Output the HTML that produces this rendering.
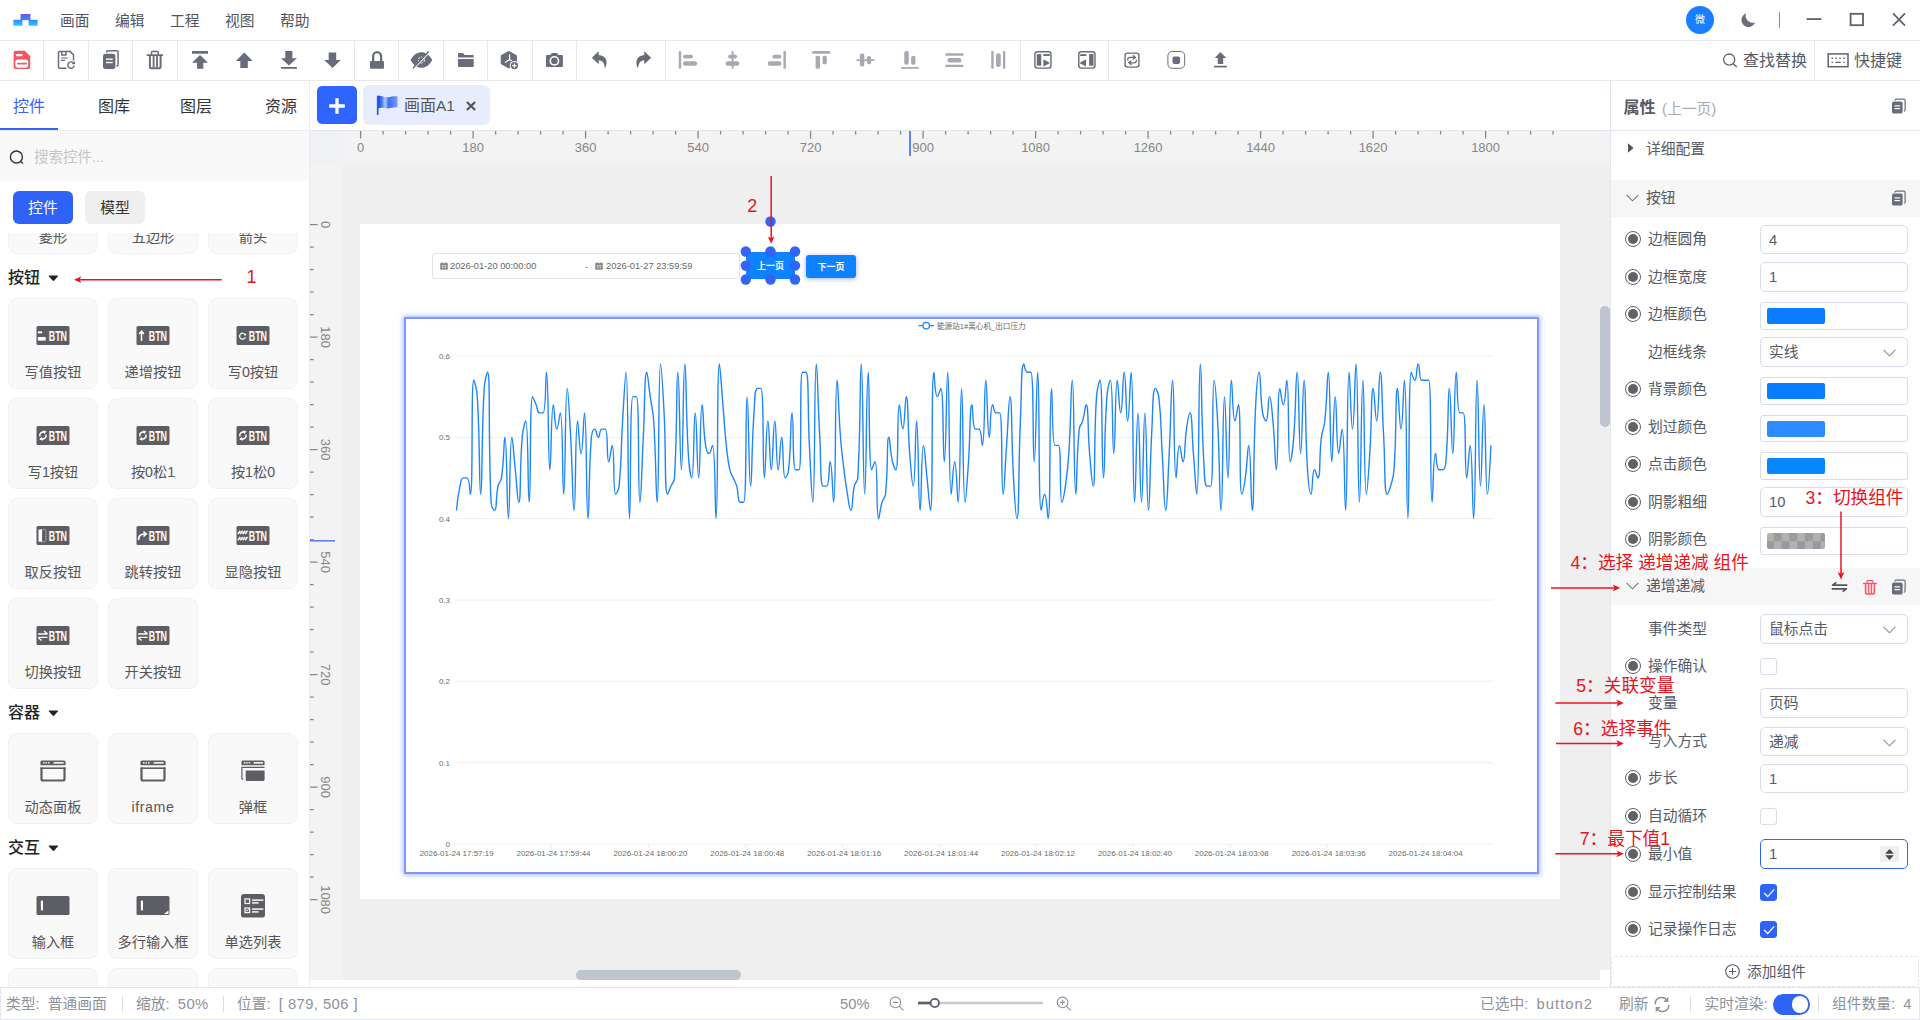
<!DOCTYPE html>
<html lang="zh-CN">
<head>
<meta charset="utf-8">
<title>画面A1</title>
<style>
*{box-sizing:border-box;margin:0;padding:0}
html,body{width:1920px;height:1020px;overflow:hidden;background:#fff}
body{position:relative;font-family:"Liberation Sans","Noto Sans CJK SC",sans-serif;font-size:14.75px;color:#555a66;-webkit-font-smoothing:antialiased}
.abs{position:absolute}
svg{display:block;overflow:visible}
/* top bar */
#topbar{position:absolute;left:0;top:0;width:1920px;height:41px;border-bottom:1px solid #e8e8ec;background:#fff}
#topbar .menu{position:absolute;top:0;height:40px;line-height:42px;font-size:14.75px;color:#50545f;white-space:nowrap}
/* toolbar */
#toolbar{position:absolute;left:0;top:41px;width:1920px;height:40px;border-bottom:1px solid #e8e8ec;background:#fff}
.tb{position:absolute;top:0;height:39px;width:44.33px}
.tb.sep{border-right:1px solid #ebebee}
.tb svg{position:absolute;left:50%;top:50%;transform:translate(-50%,-50%)}
/* left panel */
#left{position:absolute;left:0;top:81px;width:310px;height:906px;background:#fff;border-right:1px solid #ececf0;overflow:hidden}
.ltab{position:absolute;top:0;height:49px;line-height:51px;font-size:16px;color:#333;white-space:nowrap}
.card{position:absolute;width:90px;height:91px;background:#f9f9f9;border:1px solid #f0f0f0;border-radius:9px}
.card .lbl{position:absolute;left:0;right:0;top:63px;text-align:center;font-size:14.2px;line-height:20px;color:#555;white-space:nowrap}
.card svg{position:absolute;left:50%;transform:translateX(-50%)}
.sec{position:absolute;left:8px;font-size:16px;font-weight:500;color:#222;line-height:22px;white-space:nowrap}
/* canvas */
#canvas{position:absolute;left:310px;top:131px;width:1300px;height:849px;background:#efefef;overflow:hidden}
/* right */
#right{position:absolute;left:1610px;top:81px;width:310px;height:906px;background:#fff;border-left:1px solid #e3e6f0;overflow:hidden}
.row{position:absolute;left:0;width:309px;height:30px}
.row .lab{position:absolute;left:37px;top:0;line-height:30px;font-size:14.75px;color:#555a66;white-space:nowrap}
.row .rad{position:absolute;left:14.4px;top:7px;width:16px;height:16px;border:1.8px solid #606268;border-radius:50%}
.row .rad:after{content:"";position:absolute;left:2px;top:2px;right:2px;bottom:2px;border-radius:50%;background:#606268}
.inp{position:absolute;left:149px;top:.5px;width:148px;height:29.8px;border:1px solid #d9dbe8;border-radius:5px;background:#fff;font-size:14.75px;line-height:28px;padding-left:8px;color:#555a66;white-space:nowrap}
.inp.col{height:27.5px;top:3.4px;border-radius:3px}
.inp .sw{position:absolute;left:6px;top:5px;width:58px;height:16px;border-radius:2px}
.inp .chev{position:absolute;right:11px;top:11px}
.cb{position:absolute;left:149px;top:7px;width:17px;height:17px;border:1px solid #d9dbe8;border-radius:3px;background:#fff}
.cb.on{background:#2f63f6;border-color:#2f63f6}
.shead{position:absolute;left:0;width:309px;height:37px;background:#f6f6f6}
.shead .t{position:absolute;left:35px;top:0;line-height:37px;font-size:14.75px;color:#555a66}
.red{color:#e8131e;position:absolute;white-space:nowrap;font-size:18px;line-height:22px}
/* status */
#status{position:absolute;left:0;top:987px;width:1920px;height:33px;border:1px solid #e3e6f0;background:#fff;font-size:14.75px;color:#8d919c}
#status span.t{position:absolute;top:0;line-height:33px;white-space:nowrap}
#status i.sp{position:absolute;top:8px;width:1px;height:16px;background:#dcdde2}
</style>
</head>
<body>
<!--TOPBAR-->
<div id="topbar">
<svg class="abs" style="left:13px;top:14px" width="25" height="12" viewBox="0 0 25 12">
<defs><linearGradient id="lg1" x1="0" y1="0" x2="0" y2="1"><stop offset="0" stop-color="#6a55f6"/><stop offset="1" stop-color="#3f86fa"/></linearGradient>
<linearGradient id="lg2" x1="0" y1="0" x2="0" y2="1"><stop offset="0" stop-color="#2f86ff"/><stop offset="1" stop-color="#2bd0ff"/></linearGradient></defs>
<rect x="7.5" y="0" width="10" height="6.2" fill="url(#lg1)"/><rect x="0.4" y="5.8" width="9" height="6" fill="url(#lg2)"/><rect x="15.6" y="5.8" width="9" height="6" fill="url(#lg2)"/></svg>
<span class="menu" style="left:60px">画面</span><span class="menu" style="left:115px">编辑</span><span class="menu" style="left:170px">工程</span><span class="menu" style="left:225px">视图</span><span class="menu" style="left:280px">帮助</span>
<div class="abs" style="left:1686px;top:6px;width:28px;height:28px;border-radius:50%;background:#1a7ffe;color:#fff;font-size:10px;line-height:28px;text-align:center">微</div>
<svg class="abs" style="left:1741px;top:13px" width="15" height="14" viewBox="0 0 15 14"><path d="M5 0.5A7.2 7.2 0 0 0 14 9.5A7 7 0 1 1 5 0.5Z" fill="#6a6d7a"/></svg>
<div class="abs" style="left:1779px;top:12px;width:1px;height:16px;background:#8a8d96"></div>
<svg class="abs" style="left:1806px;top:12px" width="100" height="15" viewBox="0 0 100 15" fill="none" stroke="#5c606c" stroke-width="1.8"><path d="M0.6 7.1H15.4"/><rect x="44.6" y="1.8" width="12.4" height="11.4"/><path d="M87 1.4L99 13.6M99 1.4L87 13.6" stroke-width="1.7"/></svg>
</div>
<!--TOOLBAR-->
<div id="toolbar">
<svg class="abs" style="left:0;top:0" width="1920" height="39" viewBox="0 41 1920 39">
<g fill="#e9e9ed"><rect x="43" y="41" width="1" height="39"/><rect x="88" y="41" width="1" height="39"/><rect x="132" y="41" width="1" height="39"/><rect x="177" y="41" width="1" height="39"/><rect x="354" y="41" width="1" height="39"/><rect x="398" y="41" width="1" height="39"/><rect x="443" y="41" width="1" height="39"/><rect x="487" y="41" width="1" height="39"/><rect x="532" y="41" width="1" height="39"/><rect x="576" y="41" width="1" height="39"/><rect x="665" y="41" width="1" height="39"/><rect x="1020" y="41" width="1" height="39"/><rect x="1108" y="41" width="1" height="39"/><rect x="1814" y="41" width="1" height="39"/></g>
<path d="M15.6 50.8H24.8L30.2 56V67.1a2 2 0 0 1-2 2H15.6a2 2 0 0 1-2-2V52.8a2 2 0 0 1 2-2Z" fill="#f4575f"/><rect x="15.9" y="54.1" width="6.6" height="2.1" rx="1" fill="#fff"/><rect x="15.3" y="59.4" width="12.8" height="8.4" rx="2.8" fill="#fff"/><rect x="16.9" y="62.7" width="10.3" height="1.9" rx=".9" fill="#f4575f"/>
<g fill="none" stroke="#696c7a" stroke-width="1.5" stroke-linejoin="round"><path d="M66.5 68.2H59.5a1 1 0 0 1-1-1V52.6a1 1 0 0 1 1-1H70.2L73.5 54.9V60.6"/><path d="M61.7 51.8V55H66V51.8"/><path d="M61 58H67.6M61 60.4H65" stroke-width="1.2"/><path d="M73.4 62.9A3.2 3.2 0 1 0 74.2 65.6" stroke-width="1.4"/><path d="M74.4 61.4V63.6H72.2" stroke-width="1.2"/></g>
<path d="M106.5 52.4V52.3a1.5 1.5 0 0 1 1.5-1.5H116.6a1.5 1.5 0 0 1 1.5 1.5V64.6a1.5 1.5 0 0 1-1.5 1.5H116.4" fill="none" stroke="#696c7a" stroke-width="1.5"/><rect x="103" y="53.7" width="12.4" height="15.4" rx="2.3" fill="#696c7a"/><rect x="106" y="58.5" width="6.7" height="1.4" fill="#fff"/><rect x="106" y="61.8" width="6.7" height="1.4" fill="#fff"/>
<g fill="none" stroke="#696c7a"><path d="M151.5 54.4V52.4a.9.9 0 0 1 .9-.9H157.4a.9.9 0 0 1 .9.9V54.4" stroke-width="1.4"/><path d="M149.9 56V67a1.2 1.2 0 0 0 1.2 1.2H159.4a1.2 1.2 0 0 0 1.2-1.2V56" stroke-width="2"/><path d="M153.6 56V67.6M157 56V67.6" stroke-width="1.8"/></g><rect x="146.7" y="54.2" width="16.4" height="1.9" rx=".6" fill="#696c7a"/>
<g fill="#696c7a"><rect x="192" y="51" width="16" height="2.7"/><polygon points="200,55 208,62.75 203.3,62.75 203.3,68.8 197,68.8 197,62.75 192,62.75"/><polygon points="244.3,52.6 252.7,60.9 247.8,60.9 247.8,67.9 240.3,67.9 240.3,60.9 235.8,60.9"/><polygon points="285.3,51 292.4,51 292.4,58.25 296.9,58.25 288.9,65.6 281,58.25 285.3,58.25"/><rect x="281" y="67" width="15.9" height="1.8"/><polygon points="328.7,52.4 336.2,52.4 336.2,60 340.8,60 332.5,67.9 324.2,60 328.7,60"/></g>
<rect x="370" y="60.9" width="14" height="7.9" rx="1" fill="#696c7a"/><path d="M373.15 61.5V56.15a3.98 3.98 0 0 1 7.96 0V61.5" fill="none" stroke="#696c7a" stroke-width="2.3"/>
<path d="M410.6 60C413.6 54.4 417.4 52.2 421.4 52.2C425.4 52.2 429.2 54.4 432.2 60C429.2 65.6 425.4 67.8 421.4 67.8C417.4 67.8 413.6 65.6 410.6 60Z" fill="#696c7a"/><circle cx="421.4" cy="60" r="3" fill="none" stroke="#fff" stroke-width="1" stroke-dasharray="2.2 1.2"/><path d="M430 51.8L414 68.4" stroke="#fff" stroke-width="1.3"/><path d="M428.8 51.6L412.9 68.2" stroke="#696c7a" stroke-width="1.5"/>
<path d="M458 57.6V53.9a1 1 0 0 1 1-1H463l1.6 2.1H472.7a1 1 0 0 1 1 1V57.6Z" fill="#696c7a"/><path d="M458 59H473.7V66a1 1 0 0 1-1 1H459a1 1 0 0 1-1-1Z" fill="#696c7a"/>
<polygon points="508.8,51.4 516.4,55.6 516.4,63.8 508.8,68 501.2,63.8 501.2,55.6" fill="#696c7a" stroke="#696c7a" stroke-width="1" stroke-linejoin="round"/><path d="M509.6 54.3V59.6L505 62.4M509.6 59.6L512 61" stroke="#fff" stroke-width="1.2" fill="none"/><circle cx="514.4" cy="65.6" r="4.7" fill="#fff"/><circle cx="514.4" cy="65.6" r="3.7" fill="#696c7a"/><path d="M512.2 65.6H516.6M514.4 63.4V67.8" stroke="#fff" stroke-width="1.2"/>
<path d="M547 55H550.4L551.7 52.9H557.1L558.4 55H561.9a1 1 0 0 1 1 1V66a1 1 0 0 1-1 1H547a1 1 0 0 1-1-1V56a1 1 0 0 1 1-1Z" fill="#696c7a"/><circle cx="554.4" cy="60.9" r="4.9" fill="#fff"/><circle cx="554.4" cy="60.9" r="3.3" fill="#696c7a"/>
<path d="M598.7 51.3L591.8 57.8L598.7 64.3V60.4C602.5 60.3 604.6 62.6 604.9 68.6C608.8 61.5 605.6 55.4 598.7 55.1Z" fill="#696c7a"/><path d="M598.7 51.3L591.8 57.8L598.7 64.3V60.4C602.5 60.3 604.6 62.6 604.9 68.6C608.8 61.5 605.6 55.4 598.7 55.1Z" fill="#696c7a" transform="translate(1243,0) scale(-1,1)"/>
<g fill="#a7a9b2"><rect x="678.8" y="51" width="2.4" height="17.8" rx="0.8"/><rect x="683" y="54.8" width="9.9" height="3.7" rx="1.8"/><rect x="683" y="61.3" width="14.1" height="4.4" rx="2"/><rect x="731.6" y="51" width="2" height="17.8" rx="0.8"/><rect x="728.1" y="54.8" width="9" height="3.7" rx="1.8"/><rect x="725.6" y="61.3" width="13.8" height="4.4" rx="2"/><rect x="783.4" y="51" width="2.5" height="17.8" rx="0.8"/><rect x="772.5" y="54.8" width="8.9" height="3.7" rx="1.8"/><rect x="767.8" y="61.3" width="13.6" height="4.4" rx="2"/><rect x="812.1" y="51" width="18.2" height="2.7" rx="1"/><rect x="815.6" y="55.7" width="4.4" height="13.1" rx="1.5"/><rect x="822.6" y="55.7" width="4.2" height="8.5" rx="1.5"/><rect x="856.4" y="59.2" width="18.3" height="1.8" rx="0.8"/><rect x="859.9" y="53.4" width="4.4" height="13.1" rx="2"/><rect x="866.9" y="56" width="4.2" height="8.2" rx="2"/><rect x="901" y="67" width="17.9" height="1.8" rx="0.5"/><rect x="904.25" y="51" width="4.5" height="13.8" rx="2"/><rect x="911.1" y="55.7" width="4.4" height="9.1" rx="2"/><rect x="945.3" y="53.2" width="18.3" height="2.5" rx="1"/><rect x="947.4" y="58" width="13.9" height="4.6" rx="2.2"/><rect x="945.3" y="64.8" width="18.3" height="2.2" rx="1"/><rect x="991.25" y="51" width="2.4" height="17.8" rx="0.8"/><rect x="996" y="53.2" width="4.8" height="13.8" rx="2.2"/><rect x="1003" y="51" width="2.3" height="17.8" rx="0.8"/></g>
<g fill="#696c7a"><rect x="1034.9" y="51.7" width="16.1" height="16.4" rx="2.5" fill="none" stroke="#696c7a" stroke-width="1.4"/><rect x="1036.8" y="54.1" width="4.4" height="11.6" rx="0"/><rect x="1043.3" y="54.1" width="6.5" height="1.9" rx="0"/><polygon points="1043.4,59.3 1050,62.9 1043.4,66.5"/><rect x="1078.8" y="51.7" width="16.2" height="16.4" rx="2.5" fill="none" stroke="#696c7a" stroke-width="1.4"/><rect x="1080.2" y="54.1" width="6.1" height="1.9" rx="0"/><polygon points="1086,59.3 1079.4,62.9 1086,66.5"/><rect x="1089.1" y="54.1" width="4.4" height="11.6" rx="0"/></g>
<g fill="none" stroke="#696c7a" stroke-width="1.4"><rect x="1125.1" y="53.1" width="13.8" height="14" rx="2.6"/><path d="M1127.6 60.6V59.8A2.4 2.4 0 0 1 1130 57.4H1135.2M1132.8 55.3L1135.4 57.4L1132.8 59.5M1136.4 59.8V60.4A2.4 2.4 0 0 1 1134 62.8H1129.2M1131.5 60.7L1128.9 62.8L1131.5 64.9" stroke-width="1.3"/></g>
<rect x="1167.9" y="51.5" width="16.8" height="16.8" rx="4.2" fill="none" stroke="#696c7a" stroke-width="1"/><rect x="1172.5" y="56.6" width="7.6" height="7.4" rx="2" fill="#696c7a"/>
<g fill="#696c7a"><polygon points="1220.3,52 1226.4,58 1223.2,58 1223.2,63.9 1217.8,63.9 1217.8,58 1214.7,58"/><rect x="1214" y="65.75" width="12.9" height="1.7"/></g>
<g fill="none" stroke="#5f6370" stroke-width="1.3"><circle cx="1729.2" cy="59.6" r="5.6"/><path d="M1733.2 63.8L1736.8 67"/><rect x="1828.2" y="53.9" width="19.8" height="12.8" stroke-width="1.5"/><path d="M1831.5 58.2H1833M1835.4 58.2H1836.9M1839.3 58.2H1840.8M1843.2 58.2H1844.7M1831.5 62.4H1833M1835.4 62.4H1840.8M1843.2 62.4H1844.7" stroke-width="1.4"/></g>
</svg>
<span class="abs" style="left:1743px;top:0;line-height:40px;font-size:16px;color:#565a66;white-space:nowrap">查找替换</span><span class="abs" style="left:1854px;top:0;line-height:40px;font-size:16px;color:#565a66;white-space:nowrap">快捷键</span>
</div>
<!--LEFT-->
<div id="left">
<span class="ltab" style="left:13px;color:#3b62f6">控件</span>
<span class="ltab" style="left:98px">图库</span>
<span class="ltab" style="left:180px">图层</span>
<span class="ltab" style="left:265px">资源</span>
<div class="abs" style="left:0;top:47px;width:58px;height:3px;background:#2f62f6"></div>
<div class="abs" style="left:0;top:50px;width:310px;height:50px;background:#f9f9f9"></div>
<svg class="abs" style="left:9px;top:69px" width="16" height="15" viewBox="0 0 16 15" fill="none" stroke="#333" stroke-width="1.4"><circle cx="7.4" cy="7" r="6"/><path d="M11.6 11.4L14 13.6"/></svg>
<span class="abs" style="left:34px;top:64px;line-height:24px;font-size:14.5px;color:#c4c4c8;white-space:nowrap">搜索控件...</span>
<div class="abs" style="left:13px;top:110px;width:60px;height:33px;border-radius:6px;background:#2f62f6;color:#fff;font-size:14.75px;line-height:34px;text-align:center">控件</div>
<div class="abs" style="left:85px;top:110px;width:60px;height:33px;border-radius:6px;background:#efefef;color:#333;font-size:14.75px;line-height:34px;text-align:center">模型</div>
<div class="abs" style="left:0;top:152px;width:309px;height:754px;overflow:hidden">
<div class="card" style="left:8px;top:-70px"><div class="lbl">菱形</div></div>
<div class="card" style="left:108px;top:-70px"><div class="lbl">五边形</div></div>
<div class="card" style="left:208px;top:-70px"><div class="lbl">箭头</div></div>
<div class="card" style="left:8px;top:65px"><svg width="33" height="19" viewBox="0 0 33 19" style="top:27px"><rect width="33" height="19" rx="1.5" fill="#5d5e63"/><rect x="1.4" y="5.4" width="4.2" height="1.9" fill="#fff"/><rect x="1.4" y="11" width="7.8" height="3.6" fill="#fff"/><text x="12.3" y="15.1" font-family="Liberation Sans,sans-serif" font-weight="700" font-size="15" fill="#fff" textLength="18.2" lengthAdjust="spacingAndGlyphs">BTN</text></svg><div class="lbl">写值按钮</div></div>
<div class="card" style="left:108px;top:65px"><svg width="33" height="19" viewBox="0 0 33 19" style="top:27px"><rect width="33" height="19" rx="1.5" fill="#5d5e63"/><path d="M5 15V5.6M2.6 8L5 5.2L7.4 8" fill="none" stroke="#fff" stroke-width="1.5"/><text x="12.3" y="15.1" font-family="Liberation Sans,sans-serif" font-weight="700" font-size="15" fill="#fff" textLength="18.2" lengthAdjust="spacingAndGlyphs">BTN</text></svg><div class="lbl">递增按钮</div></div>
<div class="card" style="left:208px;top:65px"><svg width="33" height="19" viewBox="0 0 33 19" style="top:27px"><rect width="33" height="19" rx="1.5" fill="#5d5e63"/><path d="M8.6 8.6A3 3 0 1 0 8.9 11.2" fill="none" stroke="#fff" stroke-width="1.2"/><path d="M9.6 7.2V9.4H7.4Z" fill="#fff"/><text x="12.3" y="15.1" font-family="Liberation Sans,sans-serif" font-weight="700" font-size="15" fill="#fff" textLength="18.2" lengthAdjust="spacingAndGlyphs">BTN</text></svg><div class="lbl">写0按钮</div></div>
<div class="card" style="left:8px;top:165px"><svg width="33" height="19" viewBox="0 0 33 19" style="top:27px"><rect width="33" height="19" rx="1.5" fill="#5d5e63"/><path d="M3.4 10.5A3.4 3.4 0 0 1 8 6.3" fill="none" stroke="#fff" stroke-width="1.5"/><path d="M6.6 4.2L10 5.6L7.6 8.2Z" fill="#fff"/><path d="M9.4 8.5A3.4 3.4 0 0 1 4.8 12.7" fill="none" stroke="#fff" stroke-width="1.5"/><path d="M6.2 14.8L2.8 13.4L5.2 10.8Z" fill="#fff"/><text x="12.3" y="15.1" font-family="Liberation Sans,sans-serif" font-weight="700" font-size="15" fill="#fff" textLength="18.2" lengthAdjust="spacingAndGlyphs">BTN</text></svg><div class="lbl">写1按钮</div></div>
<div class="card" style="left:108px;top:165px"><svg width="33" height="19" viewBox="0 0 33 19" style="top:27px"><rect width="33" height="19" rx="1.5" fill="#5d5e63"/><path d="M3.4 10.5A3.4 3.4 0 0 1 8 6.3" fill="none" stroke="#fff" stroke-width="1.5"/><path d="M6.6 4.2L10 5.6L7.6 8.2Z" fill="#fff"/><path d="M9.4 8.5A3.4 3.4 0 0 1 4.8 12.7" fill="none" stroke="#fff" stroke-width="1.5"/><path d="M6.2 14.8L2.8 13.4L5.2 10.8Z" fill="#fff"/><text x="12.3" y="15.1" font-family="Liberation Sans,sans-serif" font-weight="700" font-size="15" fill="#fff" textLength="18.2" lengthAdjust="spacingAndGlyphs">BTN</text></svg><div class="lbl">按0松1</div></div>
<div class="card" style="left:208px;top:165px"><svg width="33" height="19" viewBox="0 0 33 19" style="top:27px"><rect width="33" height="19" rx="1.5" fill="#5d5e63"/><path d="M3.4 10.5A3.4 3.4 0 0 1 8 6.3" fill="none" stroke="#fff" stroke-width="1.5"/><path d="M6.6 4.2L10 5.6L7.6 8.2Z" fill="#fff"/><path d="M9.4 8.5A3.4 3.4 0 0 1 4.8 12.7" fill="none" stroke="#fff" stroke-width="1.5"/><path d="M6.2 14.8L2.8 13.4L5.2 10.8Z" fill="#fff"/><text x="12.3" y="15.1" font-family="Liberation Sans,sans-serif" font-weight="700" font-size="15" fill="#fff" textLength="18.2" lengthAdjust="spacingAndGlyphs">BTN</text></svg><div class="lbl">按1松0</div></div>
<div class="card" style="left:8px;top:265px"><svg width="33" height="19" viewBox="0 0 33 19" style="top:27px"><rect width="33" height="19" rx="1.5" fill="#5d5e63"/><rect x="2" y="3.6" width="3.6" height="12" fill="#fff"/><rect x="3" y="3.4" width="6.4" height="12.4" rx="1.4" fill="none" stroke="#fff" stroke-width=".7" stroke-dasharray="1 .8"/><text x="12.3" y="15.1" font-family="Liberation Sans,sans-serif" font-weight="700" font-size="15" fill="#fff" textLength="18.2" lengthAdjust="spacingAndGlyphs">BTN</text></svg><div class="lbl">取反按钮</div></div>
<div class="card" style="left:108px;top:265px"><svg width="33" height="19" viewBox="0 0 33 19" style="top:27px"><rect width="33" height="19" rx="1.5" fill="#5d5e63"/><path d="M2 14C2 9.6 4.4 8 8 8" fill="none" stroke="#fff" stroke-width="1.7"/><path d="M7 4.6L11 8L7 11.4Z" fill="#fff"/><text x="12.3" y="15.1" font-family="Liberation Sans,sans-serif" font-weight="700" font-size="15" fill="#fff" textLength="18.2" lengthAdjust="spacingAndGlyphs">BTN</text></svg><div class="lbl">跳转按钮</div></div>
<div class="card" style="left:208px;top:265px"><svg width="33" height="19" viewBox="0 0 33 19" style="top:27px"><rect width="33" height="19" rx="1.5" fill="#5d5e63"/><g stroke="#fff" stroke-width="1.5"><path d="M1.4 8L3.8 4.8M3.8 8L6.2 4.8M6.2 8L8.6 4.8M8.6 8L11 4.8M1.4 14.2L3.8 11M3.8 14.2L6.2 11M6.2 14.2L8.6 11M8.6 14.2L11 11"/></g><text x="12.3" y="15.1" font-family="Liberation Sans,sans-serif" font-weight="700" font-size="15" fill="#fff" textLength="18.2" lengthAdjust="spacingAndGlyphs">BTN</text></svg><div class="lbl">显隐按钮</div></div>
<div class="card" style="left:8px;top:365px"><svg width="33" height="19" viewBox="0 0 33 19" style="top:27px"><rect width="33" height="19" rx="1.5" fill="#5d5e63"/><path d="M1.6 8H11M7.6 5L11 8" fill="none" stroke="#fff" stroke-width="1.4"/><path d="M11 11.4H1.8M5 14.4L1.8 11.4" fill="none" stroke="#fff" stroke-width="1.4"/><text x="12.3" y="15.1" font-family="Liberation Sans,sans-serif" font-weight="700" font-size="15" fill="#fff" textLength="18.2" lengthAdjust="spacingAndGlyphs">BTN</text></svg><div class="lbl">切换按钮</div></div>
<div class="card" style="left:108px;top:365px"><svg width="33" height="19" viewBox="0 0 33 19" style="top:27px"><rect width="33" height="19" rx="1.5" fill="#5d5e63"/><path d="M1.6 8H11M7.6 5L11 8" fill="none" stroke="#fff" stroke-width="1.4"/><path d="M11 11.4H1.8M5 14.4L1.8 11.4" fill="none" stroke="#fff" stroke-width="1.4"/><text x="12.3" y="15.1" font-family="Liberation Sans,sans-serif" font-weight="700" font-size="15" fill="#fff" textLength="18.2" lengthAdjust="spacingAndGlyphs">BTN</text></svg><div class="lbl">开关按钮</div></div>
<div class="card" style="left:8px;top:500px"><svg width="26" height="22" viewBox="0 0 26 22" style="top:26px"><path d="M.4 5.2V2a1.6 1.6 0 0 1 1.6-1.6H24a1.6 1.6 0 0 1 1.6 1.6V5.2Z" fill="#5d5e63"/><g fill="#fff"><rect x="3" y="2.2" width="1.6" height="1.3"/><rect x="5.5" y="2.2" width="1.6" height="1.3"/><rect x="8" y="2.2" width="1.6" height="1.3"/><rect x="13.6" y="2.1" width="10" height="1.5"/></g><path d="M1.5 7.6V19a1.5 1.5 0 0 0 1.5 1.5H23a1.5 1.5 0 0 0 1.5-1.5V7.6" fill="none" stroke="#5d5e63" stroke-width="2.2"/><rect x=".4" y="7.4" width="25.2" height="1.6" fill="#5d5e63"/></svg><div class="lbl">动态面板</div></div>
<div class="card" style="left:108px;top:500px"><svg width="26" height="22" viewBox="0 0 26 22" style="top:26px"><path d="M.4 5.2V2a1.6 1.6 0 0 1 1.6-1.6H24a1.6 1.6 0 0 1 1.6 1.6V5.2Z" fill="#5d5e63"/><g fill="#fff"><rect x="3" y="2.2" width="1.6" height="1.3"/><rect x="5.5" y="2.2" width="1.6" height="1.3"/><rect x="8" y="2.2" width="1.6" height="1.3"/><rect x="13.6" y="2.1" width="10" height="1.5"/></g><path d="M1.5 7.6V19a1.5 1.5 0 0 0 1.5 1.5H23a1.5 1.5 0 0 0 1.5-1.5V7.6" fill="none" stroke="#5d5e63" stroke-width="2.2"/><rect x=".4" y="7.4" width="25.2" height="1.6" fill="#5d5e63"/></svg><div class="lbl" style="letter-spacing:.6px">iframe</div></div>
<div class="card" style="left:208px;top:500px"><svg width="24" height="22" viewBox="0 0 24 22" style="top:26px"><path d="M.4 5.2V2a1.6 1.6 0 0 1 1.6-1.6H22a1.6 1.6 0 0 1 1.6 1.6V5.2Z" fill="#5d5e63"/><g fill="#fff"><rect x="2.8" y="2.2" width="1.6" height="1.3"/><rect x="5.2" y="2.2" width="1.6" height="1.3"/><rect x="7.6" y="2.2" width="1.6" height="1.3"/><rect x="12.6" y="2.1" width="9.4" height="1.5"/></g><path d="M23.6 7.4H.9V18.6L2.2 19.6" fill="none" stroke="#5d5e63" stroke-width="1.2"/><path d="M4.7 10.4H23.6V19.4a1.6 1.6 0 0 1-1.6 1.6H6.3a1.6 1.6 0 0 1-1.6-1.6Z" fill="#5d5e63"/></svg><div class="lbl">弹框</div></div>
<div class="card" style="left:8px;top:635px"><svg width="33" height="19" viewBox="0 0 33 19" style="top:27px"><rect width="33" height="19" rx="1.5" fill="#5d5e63"/><rect x="4.4" y="4.4" width="2.1" height="10.2" rx=".8" fill="#fff"/></svg><div class="lbl">输入框</div></div>
<div class="card" style="left:108px;top:635px"><svg width="33" height="19" viewBox="0 0 33 19" style="top:27px"><rect width="33" height="19" rx="1.5" fill="#5d5e63"/><rect x="4.4" y="4.4" width="2.1" height="10.2" rx=".8" fill="#fff"/><path d="M32 14.4V18H27.4Z" fill="#fff"/></svg><div class="lbl">多行输入框</div></div>
<div class="card" style="left:208px;top:635px"><svg width="24" height="24" viewBox="0 0 24 24" style="top:25px"><rect width="24" height="23.6" rx="3.2" fill="#5d5e63"/><g fill="none" stroke="#fff" stroke-width="1.2"><rect x="4" y="4.9" width="4.6" height="4.6"/><rect x="4" y="14" width="4.6" height="4.6"/></g><g fill="#fff"><rect x="11" y="5.4" width="11.4" height="1.4"/><rect x="11" y="8.2" width="6.6" height="1.4"/><rect x="11" y="14.4" width="11.4" height="1.4"/><rect x="11" y="17.2" width="6.6" height="1.4"/><path d="M4.8 16.2L6 17.6L8.2 14.8L7.6 14.4L6 16.4L5.3 15.7Z"/></g></svg><div class="lbl">单选列表</div></div>
<div class="card" style="left:8px;top:735px"><div class="lbl"></div></div>
<div class="card" style="left:108px;top:735px"><div class="lbl"></div></div>
<div class="card" style="left:208px;top:735px"><div class="lbl"></div></div>
<div class="sec" style="top:34px">按钮<svg class="abs" style="left:40px;top:7px" width="11" height="8" viewBox="0 0 11 8"><path d="M1.2 1.6H9.6Q10.4 1.6 9.8 2.5L6.2 6.6Q5.4 7.3 4.6 6.6L1 2.5Q.4 1.6 1.2 1.6Z" fill="#222"/></svg></div>
<div class="sec" style="top:469px">容器<svg class="abs" style="left:40px;top:7px" width="11" height="8" viewBox="0 0 11 8"><path d="M1.2 1.6H9.6Q10.4 1.6 9.8 2.5L6.2 6.6Q5.4 7.3 4.6 6.6L1 2.5Q.4 1.6 1.2 1.6Z" fill="#222"/></svg></div>
<div class="sec" style="top:604px">交互<svg class="abs" style="left:40px;top:7px" width="11" height="8" viewBox="0 0 11 8"><path d="M1.2 1.6H9.6Q10.4 1.6 9.8 2.5L6.2 6.6Q5.4 7.3 4.6 6.6L1 2.5Q.4 1.6 1.2 1.6Z" fill="#222"/></svg></div>
</div>
</div>
<!--CTABS-->
<div class="abs" style="left:310px;top:130px;width:1610px;height:1px;background:#e3e6f0"></div>
<div class="abs" style="left:0;top:130px;width:310px;height:1px;background:#ececf0"></div>
<div class="abs" style="left:317px;top:86px;width:40px;height:38px;border-radius:5px;background:#3064fe"><svg class="abs" style="left:12px;top:11.5px" width="16" height="16" viewBox="0 0 16 16"><path d="M.2 8H15.8M8 .2V15.8" stroke="#fff" stroke-width="3.3"/></svg></div>
<div class="abs" style="left:363px;top:85px;width:127px;height:40px;border-radius:6px;background:#e7edfd">
<svg class="abs" style="left:13px;top:9.5px" width="22" height="21" viewBox="0 0 22 21"><defs><linearGradient id="fg" x1="0" y1="0" x2="1" y2="0"><stop offset="0" stop-color="#0d3fc0"/><stop offset=".22" stop-color="#4f7df0"/><stop offset=".38" stop-color="#b4c7fc"/><stop offset=".55" stop-color="#3f6fee"/><stop offset=".8" stop-color="#5a86f6"/><stop offset="1" stop-color="#7ea2fa"/></linearGradient></defs><path d="M1.6 1.2C5 -.2 8 2.6 12 2.2C16 1.8 18 .8 21.6 1.6V12.6C18 11.8 16 13.2 12 13.4C8 13.6 5 11.6 1.6 13.6Z" fill="url(#fg)"/><path d="M1.7 .6V20" stroke="#2d5be6" stroke-width="1.7"/></svg>
<span class="abs" style="left:41px;top:0;line-height:42.4px;font-size:16px;color:#555;white-space:nowrap">画面<span style="font-size:15.4px">A1</span></span>
<svg class="abs" style="left:103px;top:16px" width="10" height="10" viewBox="0 0 10 10"><path d="M.9.9L9.1 9.1M9.1.9L.9 9.1" stroke="#555" stroke-width="2.1"/></svg>
</div>
<!--CANVAS-->
<div id="canvas">
<div class="abs" style="left:0;top:0;width:1300px;height:32px;background:#f3f3f3"></div>
<div class="abs" style="left:0;top:0;width:33px;height:849px;background:#f3f3f3"></div>
<div class="abs" style="left:0;top:0;width:33px;height:32px;background:#f0f1f5"></div>
<svg class="abs" style="left:0;top:0" width="1300" height="849" viewBox="310 131 1300 849" font-family="Liberation Sans,sans-serif" font-size="13" fill="#868686">
<text x="360.6" y="152" text-anchor="middle">0</text>
<text x="473.1" y="152" text-anchor="middle">180</text>
<text x="585.6" y="152" text-anchor="middle">360</text>
<text x="698.1" y="152" text-anchor="middle">540</text>
<text x="810.6" y="152" text-anchor="middle">720</text>
<text x="923.1" y="152" text-anchor="middle">900</text>
<text x="1035.6" y="152" text-anchor="middle">1080</text>
<text x="1148.1" y="152" text-anchor="middle">1260</text>
<text x="1260.6" y="152" text-anchor="middle">1440</text>
<text x="1373.1" y="152" text-anchor="middle">1620</text>
<text x="1485.6" y="152" text-anchor="middle">1800</text>
<text transform="translate(321.4 224.6) rotate(90)" text-anchor="middle">0</text>
<text transform="translate(321.4 337.1) rotate(90)" text-anchor="middle">180</text>
<text transform="translate(321.4 449.6) rotate(90)" text-anchor="middle">360</text>
<text transform="translate(321.4 562.1) rotate(90)" text-anchor="middle">540</text>
<text transform="translate(321.4 674.6) rotate(90)" text-anchor="middle">720</text>
<text transform="translate(321.4 787.1) rotate(90)" text-anchor="middle">900</text>
<text transform="translate(321.4 899.6) rotate(90)" text-anchor="middle">1080</text>
<path d="M360.6 131V138.4M383.1 131V134.6M405.6 131V134.6M428.1 131V134.6M450.6 131V134.6M473.1 131V138.4M495.6 131V134.6M518.1 131V134.6M540.6 131V134.6M563.1 131V134.6M585.6 131V138.4M608.1 131V134.6M630.6 131V134.6M653.1 131V134.6M675.6 131V134.6M698.1 131V138.4M720.6 131V134.6M743.1 131V134.6M765.6 131V134.6M788.1 131V134.6M810.6 131V138.4M833.1 131V134.6M855.6 131V134.6M878.1 131V134.6M900.6 131V134.6M923.1 131V138.4M945.6 131V134.6M968.1 131V134.6M990.6 131V134.6M1013.1 131V134.6M1035.6 131V138.4M1058.1 131V134.6M1080.6 131V134.6M1103.1 131V134.6M1125.6 131V134.6M1148.1 131V138.4M1170.6 131V134.6M1193.1 131V134.6M1215.6 131V134.6M1238.1 131V134.6M1260.6 131V138.4M1283.1 131V134.6M1305.6 131V134.6M1328.1 131V134.6M1350.6 131V134.6M1373.1 131V138.4M1395.6 131V134.6M1418.1 131V134.6M1440.6 131V134.6M1463.1 131V134.6M1485.6 131V138.4M1508.1 131V134.6M1530.6 131V134.6M1553.1 131V134.6M310 224.6H317.6M310 247.1H313.7M310 269.6H313.7M310 292.1H313.7M310 314.6H313.7M310 337.1H317.6M310 359.6H313.7M310 382.1H313.7M310 404.6H313.7M310 427.1H313.7M310 449.6H317.6M310 472.1H313.7M310 494.6H313.7M310 517.1H313.7M310 539.6H313.7M310 562.1H317.6M310 584.6H313.7M310 607.1H313.7M310 629.6H313.7M310 652.1H313.7M310 674.6H317.6M310 697.1H313.7M310 719.6H313.7M310 742.1H313.7M310 764.6H313.7M310 787.1H317.6M310 809.6H313.7M310 832.1H313.7M310 854.6H313.7M310 877.1H313.7M310 899.6H317.6" stroke="#888" stroke-width="1.3" fill="none"/>
<rect x="909" y="131" width="2" height="25" fill="#5b82fa"/><rect x="310" y="540" width="25" height="1.6" fill="#5b82fa"/>
</svg>
<div class="abs" style="left:50px;top:93px;width:1200px;height:675px;background:#fff"></div>
<div class="abs" style="left:122px;top:122px;width:308px;height:26px;border:1px solid #e2e2e2;border-radius:3px;background:#fff;font-size:9.3px;color:#666;line-height:24px;white-space:nowrap"><svg class="abs" style="left:7px;top:8px" width="8" height="8" viewBox="0 0 8 8"><path d="M.3 1.2H7.7V7.6H.3Z" fill="#777"/><path d="M1.2 3.4H6.8M1.2 5.2H6.8M2.8 2.6V7M5.2 2.6V7" stroke="#fff" stroke-width=".5"/><path d="M2 .2V1.6M6 .2V1.6" stroke="#777" stroke-width=".9"/></svg><span class="abs" style="left:17px;top:0">2026-01-20 00:00:00</span><span class="abs" style="left:152px;top:1px">-</span><svg class="abs" style="left:162px;top:8px" width="8" height="8" viewBox="0 0 8 8"><path d="M.3 1.2H7.7V7.6H.3Z" fill="#777"/><path d="M1.2 3.4H6.8M1.2 5.2H6.8M2.8 2.6V7M5.2 2.6V7" stroke="#fff" stroke-width=".5"/><path d="M2 .2V1.6M6 .2V1.6" stroke="#777" stroke-width=".9"/></svg><span class="abs" style="left:173px;top:0">2026-01-27 23:59:59</span></div>
<div class="abs" style="left:436px;top:121px;width:49px;height:27px;background:#0f82ff;border-radius:2px;color:#fff;font-size:9px;font-weight:700;line-height:28px;text-align:center">上一页</div>
<div class="abs" style="left:496px;top:123.5px;width:50px;height:23.5px;background:#0f82ff;border-radius:3px;color:#fff;font-size:9px;font-weight:700;line-height:24px;text-align:center;box-shadow:0 1px 5px rgba(40,90,200,.45)">下一页</div>
<svg class="abs" style="left:0;top:0" width="1300" height="300" viewBox="310 131 1300 300"><g fill="#3364f5"><circle cx="745.8" cy="251.5" r="5.2"/><circle cx="770.5" cy="251.5" r="5.2"/><circle cx="795" cy="251.5" r="5.2"/><circle cx="745.8" cy="265.6" r="5.2"/><circle cx="795" cy="265.6" r="5.2"/><circle cx="745.8" cy="279.5" r="5.2"/><circle cx="770.5" cy="279.5" r="5.2"/><circle cx="795" cy="279.5" r="5.2"/><circle cx="770.5" cy="221.5" r="5.2"/></g></svg>
<div class="abs" style="left:94.3px;top:185.6px;width:1134.6px;height:557.4px;border:2px solid #7d99fc;background:#fff;box-shadow:0 0 5px 1px rgba(100,135,255,.6)"></div>
<svg class="abs" style="left:0;top:0" width="1300" height="849" viewBox="310 131 1300 849" font-family="Liberation Sans,Noto Sans CJK SC,sans-serif" font-size="8" fill="#6a6a6a">
<text x="450" y="358.8" text-anchor="end">0.6</text>
<text x="450" y="440.2" text-anchor="end">0.5</text>
<text x="450" y="521.5" text-anchor="end">0.4</text>
<text x="450" y="602.9" text-anchor="end">0.3</text>
<text x="450" y="684.2" text-anchor="end">0.2</text>
<text x="450" y="765.6" text-anchor="end">0.1</text>
<text x="450" y="847.0" text-anchor="end">0</text>
<path d="M455 355.9H1492.5M455 437.3H1492.5M455 518.6H1492.5M455 600.0H1492.5M455 681.3H1492.5M455 762.7H1492.5M455 844.1H1492.5" stroke="#eeeeee" stroke-width="1" fill="none"/>
<text x="456.6" y="855.9" text-anchor="middle" textLength="74" lengthAdjust="spacingAndGlyphs">2026-01-24 17:57:19</text>
<text x="553.5" y="855.9" text-anchor="middle" textLength="74" lengthAdjust="spacingAndGlyphs">2026-01-24 17:59:44</text>
<text x="650.4" y="855.9" text-anchor="middle" textLength="74" lengthAdjust="spacingAndGlyphs">2026-01-24 18:00:20</text>
<text x="747.3" y="855.9" text-anchor="middle" textLength="74" lengthAdjust="spacingAndGlyphs">2026-01-24 18:00:48</text>
<text x="844.2" y="855.9" text-anchor="middle" textLength="74" lengthAdjust="spacingAndGlyphs">2026-01-24 18:01:16</text>
<text x="941.1" y="855.9" text-anchor="middle" textLength="74" lengthAdjust="spacingAndGlyphs">2026-01-24 18:01:44</text>
<text x="1038.0" y="855.9" text-anchor="middle" textLength="74" lengthAdjust="spacingAndGlyphs">2026-01-24 18:02:12</text>
<text x="1134.9" y="855.9" text-anchor="middle" textLength="74" lengthAdjust="spacingAndGlyphs">2026-01-24 18:02:40</text>
<text x="1231.8" y="855.9" text-anchor="middle" textLength="74" lengthAdjust="spacingAndGlyphs">2026-01-24 18:03:08</text>
<text x="1328.7" y="855.9" text-anchor="middle" textLength="74" lengthAdjust="spacingAndGlyphs">2026-01-24 18:03:36</text>
<text x="1425.6" y="855.9" text-anchor="middle" textLength="74" lengthAdjust="spacingAndGlyphs">2026-01-24 18:04:04</text>
<path d="M454.9 844V847.4M551.8 844V847.4M648.7 844V847.4M745.6 844V847.4M842.5 844V847.4M939.4 844V847.4M1036.3 844V847.4M1133.2 844V847.4M1230.1 844V847.4M1327.0 844V847.4M1423.9 844V847.4" stroke="#ececec" stroke-width="1" fill="none"/>
<path d="M918.5 325.6H934" stroke="#1989fa" stroke-width="1.3"/><circle cx="926.2" cy="325.6" r="3.3" fill="#fff" stroke="#1989fa" stroke-width="1.3"/><text x="937" y="329.2" font-size="7.6" fill="#666">能源站1#离心机_出口压力</text>
<!--LINE0--><path d="M456.5 510.5C456.5 510.5 457.4 498.1 460.0 486.1C460.9 481.8 460.9 477.9 463.4 477.9C464.4 477.9 466.3 477.9 466.9 477.9C469.7 477.9 469.9 494.2 470.3 494.2C473.4 494.2 470.8 380.3 473.8 380.3C474.2 380.3 476.8 388.3 477.3 396.6C480.2 445.2 479.1 494.2 480.7 494.2C482.5 494.2 481.2 441.2 484.2 388.4C484.6 380.2 487.2 372.2 487.6 372.2C490.7 372.2 487.9 437.6 491.1 502.3C491.3 506.7 493.6 510.5 494.6 510.5C497.1 510.5 495.5 498.1 498.0 486.1C498.9 481.8 500.9 482.3 501.5 477.9C504.3 457.9 503.8 437.3 504.9 437.3C507.2 437.3 506.7 518.6 508.4 518.6C510.1 518.6 509.4 437.3 511.9 437.3C512.8 437.3 513.6 453.5 515.3 469.8C517.0 486.1 517.6 502.3 518.8 502.3C521.1 502.3 519.5 469.7 522.2 437.3C522.9 429.0 525.1 421.0 525.7 421.0C528.6 421.0 527.6 502.3 529.2 502.3C531.1 502.3 529.4 396.6 532.6 396.6C532.9 396.6 534.3 400.6 536.1 404.7C537.8 408.8 537.0 412.9 539.5 412.9C540.5 412.9 542.7 412.9 543.0 412.9C546.2 412.9 545.4 372.2 546.4 372.2C548.9 372.2 547.8 469.8 549.9 469.8C551.3 469.8 550.9 404.7 553.4 404.7C554.3 404.7 554.8 429.1 556.8 429.1C558.2 429.1 559.7 412.9 560.3 412.9C563.2 412.9 562.2 494.2 563.7 494.2C565.7 494.2 564.8 388.4 567.2 388.4C568.3 388.4 569.3 412.8 570.7 437.3C572.7 473.9 572.6 510.5 574.1 510.5C576.0 510.5 575.0 421.0 577.6 421.0C578.5 421.0 579.5 453.5 581.0 453.5C583.0 453.5 583.5 412.9 584.5 412.9C587.0 412.9 586.0 518.6 588.0 518.6C589.5 518.6 588.3 477.6 591.4 437.3C591.8 432.9 593.2 429.1 594.9 429.1C596.6 429.1 596.6 437.3 598.3 437.3C600.1 437.3 599.3 429.1 601.8 429.1C602.8 429.1 604.9 429.1 605.3 429.1C608.4 429.1 606.4 461.7 608.7 461.7C609.9 461.7 611.3 445.4 612.2 445.4C614.8 445.4 612.7 494.2 615.6 494.2C616.2 494.2 618.7 490.4 619.1 486.1C622.1 453.8 620.6 453.5 622.6 421.0C624.0 396.6 625.2 372.2 626.0 372.2C628.6 372.2 627.6 518.6 629.5 518.6C631.0 518.6 629.6 396.6 632.9 396.6C633.0 396.6 636.3 396.6 636.4 396.6C639.7 396.6 637.7 502.3 639.9 502.3C641.2 502.3 641.6 469.8 643.3 437.3C645.0 404.7 644.3 372.2 646.8 372.2C647.7 372.2 648.5 384.4 650.2 396.6C652.0 408.8 652.9 408.7 653.7 421.0C656.3 461.6 655.9 502.3 657.2 502.3C659.3 502.3 658.1 364.0 660.6 364.0C661.5 364.0 662.8 388.4 664.1 412.9C666.2 453.5 664.4 494.2 667.5 494.2C667.9 494.2 669.3 490.1 671.0 486.1C672.7 482.0 674.2 482.3 674.5 477.9C677.6 425.4 676.1 372.2 677.9 372.2C679.6 372.2 679.7 469.8 681.4 469.8C683.2 469.8 683.0 364.0 684.8 364.0C686.4 364.0 685.6 408.9 688.3 453.5C689.0 465.8 690.8 477.9 691.7 477.9C694.3 477.9 693.5 412.9 695.2 412.9C696.9 412.9 697.0 477.9 698.7 477.9C700.5 477.9 699.9 404.7 702.1 404.7C703.4 404.7 702.7 425.3 705.6 445.4C706.2 449.7 707.3 453.5 709.0 453.5C710.8 453.5 712.1 445.4 712.5 445.4C715.6 445.4 714.9 518.6 716.0 518.6C718.3 518.6 716.7 364.0 719.4 364.0C720.1 364.0 721.2 384.4 722.9 404.7C724.6 425.1 724.2 425.1 726.3 445.4C727.6 457.6 727.3 457.8 729.8 469.8C730.7 474.1 731.5 473.9 733.3 477.9C735.0 482.0 735.5 481.8 736.7 486.1C739.0 494.0 737.3 502.3 740.2 502.3C740.8 502.3 743.5 502.3 743.6 502.3C747.0 502.3 745.2 396.6 747.1 396.6C748.7 396.6 748.7 486.1 750.6 486.1C752.1 486.1 751.4 449.4 754.0 412.9C754.9 400.6 754.4 388.4 757.5 388.4C757.9 388.4 760.8 388.4 760.9 388.4C764.3 388.4 762.3 477.9 764.4 477.9C765.7 477.9 766.0 421.0 767.9 421.0C769.5 421.0 769.6 469.8 771.3 469.8C773.0 469.8 773.0 421.0 774.8 421.0C776.5 421.0 776.2 469.8 778.2 469.8C779.6 469.8 780.2 437.3 781.7 437.3C783.6 437.3 782.3 477.9 785.2 477.9C785.8 477.9 788.2 474.2 788.6 469.8C791.6 441.6 790.3 412.9 792.1 412.9C793.8 412.9 792.3 469.8 795.5 469.8C795.7 469.8 798.9 469.8 799.0 469.8C802.3 469.8 799.1 372.2 802.5 372.2C802.6 372.2 805.8 372.2 805.9 372.2C809.2 372.2 807.4 408.8 809.4 445.4C810.9 473.9 811.8 502.3 812.8 502.3C815.3 502.3 814.0 364.0 816.3 364.0C817.5 364.0 817.7 400.7 819.8 437.3C821.1 461.7 820.0 486.1 823.2 486.1C823.4 486.1 826.2 486.1 826.7 486.1C829.7 486.1 828.8 461.7 830.1 461.7C832.3 461.7 832.7 502.3 833.6 502.3C836.2 502.3 834.7 380.3 837.0 380.3C838.2 380.3 838.3 408.8 840.5 437.3C841.8 453.6 842.0 453.6 844.0 469.8C845.5 482.0 845.4 482.1 847.4 494.2C848.8 502.4 849.5 510.5 850.9 510.5C853.0 510.5 851.8 498.1 854.3 486.1C855.3 481.8 857.6 482.3 857.8 477.9C861.0 421.3 859.7 364.0 861.3 364.0C863.1 364.0 862.9 494.2 864.7 494.2C866.4 494.2 866.3 372.2 868.2 372.2C869.7 372.2 868.5 469.8 871.6 469.8C871.9 469.8 874.6 461.7 875.1 461.7C878.1 461.7 875.9 518.6 878.6 518.6C879.3 518.6 879.8 510.3 882.0 502.3C883.2 498.1 885.0 498.6 885.5 494.2C888.5 466.0 886.5 437.3 888.9 437.3C890.0 437.3 889.9 449.7 892.4 461.7C893.3 466.0 895.4 469.8 895.9 469.8C898.9 469.8 896.8 404.7 899.3 404.7C900.3 404.7 901.3 429.1 902.8 429.1C904.8 429.1 905.0 396.6 906.2 396.6C908.4 396.6 907.5 425.1 909.7 453.5C911.0 469.8 912.0 486.1 913.2 486.1C915.5 486.1 915.2 421.0 916.6 421.0C918.6 421.0 918.1 510.5 920.1 510.5C921.5 510.5 921.2 445.4 923.5 445.4C924.7 445.4 925.3 461.7 927.0 477.9C928.7 494.2 929.8 510.5 930.5 510.5C933.3 510.5 931.0 372.2 933.9 372.2C934.4 372.2 934.8 396.6 937.4 396.6C938.3 396.6 940.5 388.4 940.8 388.4C943.9 388.4 942.7 461.7 944.3 461.7C946.2 461.7 946.3 372.2 947.8 372.2C949.7 372.2 948.5 494.2 951.2 494.2C951.9 494.2 953.1 461.7 954.7 461.7C956.6 461.7 957.2 502.3 958.1 502.3C960.7 502.3 959.9 388.4 961.6 388.4C963.3 388.4 962.5 502.3 965.1 502.3C966.0 502.3 967.1 482.0 968.5 461.7C970.5 433.2 969.6 404.7 972.0 404.7C973.0 404.7 972.4 429.1 975.4 429.1C975.9 429.1 978.3 429.1 978.9 429.1C981.8 429.1 981.6 445.4 982.3 445.4C985.1 445.4 984.0 380.3 985.8 380.3C987.4 380.3 987.1 437.3 989.3 437.3C990.5 437.3 990.0 404.7 992.7 404.7C993.5 404.7 993.7 412.9 996.2 412.9C997.2 412.9 999.5 412.9 999.6 412.9C1003.0 412.9 1000.9 494.2 1003.1 494.2C1004.4 494.2 1004.8 469.8 1006.6 445.4C1008.3 421.0 1008.7 396.6 1010.0 396.6C1012.2 396.6 1011.2 437.3 1013.5 477.9C1014.6 498.3 1015.9 518.6 1016.9 518.6C1019.4 518.6 1018.2 469.8 1020.4 421.0C1021.7 392.5 1020.9 364.0 1023.9 364.0C1024.3 364.0 1024.8 372.2 1027.3 372.2C1028.3 372.2 1030.7 372.2 1030.8 372.2C1034.1 372.2 1032.5 461.7 1034.2 461.7C1036.0 461.7 1036.3 372.2 1037.7 372.2C1039.8 372.2 1038.1 510.5 1041.2 510.5C1041.5 510.5 1043.2 494.2 1044.6 494.2C1046.7 494.2 1047.5 518.6 1048.1 518.6C1051.0 518.6 1049.1 388.4 1051.5 388.4C1052.6 388.4 1051.7 445.4 1055.0 445.4C1055.2 445.4 1058.3 445.4 1058.5 445.4C1061.7 445.4 1059.2 502.3 1061.9 502.3C1062.7 502.3 1064.2 494.3 1065.4 486.1C1067.7 469.9 1067.8 469.9 1068.8 453.5C1071.2 417.0 1070.9 380.3 1072.3 380.3C1074.4 380.3 1073.6 494.2 1075.8 494.2C1077.0 494.2 1076.2 461.4 1079.2 429.1C1079.6 424.8 1081.5 425.2 1082.7 421.0C1084.9 413.0 1085.3 404.7 1086.1 404.7C1088.7 404.7 1087.5 429.2 1089.6 453.5C1091.0 469.8 1092.1 486.1 1093.1 486.1C1095.6 486.1 1093.6 441.2 1096.5 396.6C1097.1 388.3 1099.5 380.3 1100.0 380.3C1102.9 380.3 1101.5 477.9 1103.4 477.9C1105.0 477.9 1104.0 437.1 1106.9 396.6C1107.5 388.3 1109.7 380.3 1110.4 380.3C1113.2 380.3 1112.1 453.5 1113.8 453.5C1115.5 453.5 1114.9 380.3 1117.3 380.3C1118.3 380.3 1119.2 412.9 1120.7 412.9C1122.7 412.9 1122.6 372.2 1124.2 372.2C1126.1 372.2 1125.9 421.0 1127.6 421.0C1129.4 421.0 1130.2 372.2 1131.1 372.2C1133.6 372.2 1132.5 502.3 1134.6 502.3C1136.0 502.3 1136.3 412.9 1138.0 412.9C1139.8 412.9 1139.8 502.3 1141.5 502.3C1143.2 502.3 1143.3 412.9 1144.9 412.9C1146.8 412.9 1146.5 510.5 1148.4 510.5C1150.0 510.5 1149.6 469.8 1151.9 429.1C1153.0 408.7 1152.5 388.4 1155.3 388.4C1155.9 388.4 1158.3 392.2 1158.8 396.6C1161.8 424.8 1160.5 425.1 1162.2 453.5C1164.0 482.0 1164.0 510.5 1165.7 510.5C1167.4 510.5 1167.6 482.0 1169.2 453.5C1171.1 416.9 1171.1 380.3 1172.6 380.3C1174.6 380.3 1173.5 477.9 1176.1 477.9C1177.0 477.9 1177.2 445.4 1179.5 445.4C1180.7 445.4 1181.8 461.7 1183.0 461.7C1185.3 461.7 1184.2 445.3 1186.5 429.1C1187.6 420.9 1188.9 412.9 1189.9 412.9C1192.4 412.9 1191.7 433.2 1193.4 453.5C1195.1 473.9 1196.0 494.2 1196.8 494.2C1199.5 494.2 1198.3 364.0 1200.3 364.0C1201.8 364.0 1201.0 412.9 1203.8 461.7C1204.5 474.0 1204.2 486.1 1207.2 486.1C1207.6 486.1 1210.6 486.1 1210.7 486.1C1214.0 486.1 1211.6 380.3 1214.1 380.3C1215.1 380.3 1216.5 400.6 1217.6 421.0C1220.0 465.7 1219.5 510.5 1221.1 510.5C1223.0 510.5 1222.5 396.6 1224.5 396.6C1226.0 396.6 1226.4 477.9 1228.0 477.9C1229.9 477.9 1229.0 380.3 1231.4 380.3C1232.5 380.3 1232.4 421.0 1234.9 421.0C1235.9 421.0 1237.8 404.7 1238.4 404.7C1241.3 404.7 1238.9 494.2 1241.8 494.2C1242.4 494.2 1244.1 486.2 1245.3 477.9C1247.6 461.8 1247.6 445.4 1248.7 445.4C1251.0 445.4 1250.9 510.5 1252.2 510.5C1254.3 510.5 1253.0 457.5 1255.7 404.7C1256.5 388.4 1257.6 372.2 1259.1 372.2C1261.0 372.2 1259.7 392.8 1262.6 412.9C1263.2 417.2 1265.1 421.0 1266.0 421.0C1268.6 421.0 1267.8 396.6 1269.5 396.6C1271.2 396.6 1271.8 408.7 1272.9 421.0C1275.3 445.3 1275.1 469.8 1276.4 469.8C1278.6 469.8 1277.0 388.4 1279.9 388.4C1280.5 388.4 1281.9 404.7 1283.3 404.7C1285.4 404.7 1286.0 380.3 1286.8 380.3C1289.4 380.3 1287.6 461.7 1290.2 461.7C1291.1 461.7 1292.8 449.5 1293.7 437.3C1296.2 404.8 1295.6 372.2 1297.2 372.2C1299.1 372.2 1298.8 453.5 1300.6 453.5C1302.3 453.5 1302.5 380.3 1304.1 380.3C1306.0 380.3 1304.8 425.1 1307.5 469.8C1308.3 482.1 1309.3 494.2 1311.0 494.2C1312.7 494.2 1311.9 469.8 1314.5 469.8C1315.4 469.8 1317.3 477.9 1317.9 477.9C1320.8 477.9 1318.9 457.5 1321.4 437.3C1322.4 429.0 1324.0 429.2 1324.8 421.0C1327.4 396.7 1327.1 372.2 1328.3 372.2C1330.5 372.2 1329.8 461.7 1331.8 461.7C1333.2 461.7 1333.4 396.6 1335.2 396.6C1336.8 396.6 1336.3 453.5 1338.7 453.5C1339.7 453.5 1341.3 429.1 1342.1 429.1C1344.8 429.1 1344.3 510.5 1345.6 510.5C1347.8 510.5 1346.6 372.2 1349.1 372.2C1350.1 372.2 1350.9 429.1 1352.5 429.1C1354.4 429.1 1354.9 364.0 1356.0 364.0C1358.3 364.0 1357.6 502.3 1359.4 502.3C1361.1 502.3 1361.1 380.3 1362.9 380.3C1364.6 380.3 1363.8 494.2 1366.4 494.2C1367.3 494.2 1368.5 473.9 1369.8 453.5C1371.9 421.0 1371.0 388.4 1373.3 388.4C1374.4 388.4 1375.3 421.0 1376.7 421.0C1378.8 421.0 1378.7 372.2 1380.2 372.2C1382.2 372.2 1381.8 404.7 1383.7 437.3C1385.3 465.7 1384.1 494.2 1387.1 494.2C1387.6 494.2 1389.4 490.3 1390.6 486.1C1392.8 478.1 1393.4 478.1 1394.0 469.8C1396.9 429.3 1395.2 388.4 1397.5 388.4C1398.6 388.4 1399.4 429.1 1401.0 429.1C1402.8 429.1 1403.5 380.3 1404.4 380.3C1407.0 380.3 1406.2 518.6 1407.9 518.6C1409.7 518.6 1408.1 372.2 1411.3 372.2C1411.5 372.2 1413.6 380.3 1414.8 380.3C1417.0 380.3 1416.5 364.0 1418.2 364.0C1420.0 364.0 1418.8 380.3 1421.7 380.3C1422.3 380.3 1423.4 380.3 1425.2 380.3C1426.9 380.3 1428.5 380.3 1428.6 380.3C1432.0 380.3 1429.6 502.3 1432.1 502.3C1433.1 502.3 1433.0 453.5 1435.5 453.5C1436.4 453.5 1436.1 469.8 1439.0 469.8C1439.6 469.8 1441.5 469.8 1442.5 469.8C1445.0 469.8 1445.6 466.0 1445.9 461.7C1449.0 425.4 1447.6 388.4 1449.4 388.4C1451.0 388.4 1451.3 453.5 1452.8 453.5C1454.8 453.5 1454.0 372.2 1456.3 372.2C1457.5 372.2 1456.6 412.9 1459.8 412.9C1460.0 412.9 1463.0 412.9 1463.2 412.9C1466.5 412.9 1464.4 477.9 1466.7 477.9C1467.8 477.9 1469.1 445.4 1470.1 445.4C1472.5 445.4 1472.4 518.6 1473.6 518.6C1475.9 518.6 1475.1 380.3 1477.1 380.3C1478.6 380.3 1478.6 486.1 1480.5 486.1C1482.0 486.1 1482.3 404.7 1484.0 404.7C1485.8 404.7 1485.2 494.2 1487.4 494.2C1488.7 494.2 1490.9 445.4 1490.9 445.4" fill="none" stroke="#1f86f8" stroke-width="1.4" stroke-linejoin="round"/><!--LINE1-->
</svg>
<div class="abs" style="left:1290px;top:174.5px;width:10px;height:121.5px;border-radius:5px;background:#c0c4cf"></div>
<div class="abs" style="left:266px;top:839px;width:165px;height:10px;border-radius:5px;background:#c0c4cf"></div>
<div class="abs" style="left:1290px;top:839px;width:10px;height:10px;background:#fff"></div>
</div>
<!--RIGHT-->
<div id="right">
<div class="abs" style="left:0;top:49px;width:309px;height:1px;background:#e3e6f0"></div><span class="abs" style="left:12.5px;top:14px;line-height:26px;font-size:16px;font-weight:700;color:#555a66">属性</span>
<span class="abs" style="left:51px;top:14.5px;line-height:26px;font-size:14.75px;color:#a9a9a9;white-space:nowrap">(上一页)</span>
<svg class="abs" style="left:281px;top:18px" width="14" height="15" viewBox="0 0 14 15"><path d="M3 1.4V1.3a1.1 1.1 0 0 1 1.1-1.1H12a1.1 1.1 0 0 1 1.1 1.1V11a1.1 1.1 0 0 1-1.1 1.1H11.9" fill="none" stroke="#696c7a" stroke-width="1.2"/><rect x="0" y="2.4" width="10.6" height="12.2" rx="1.9" fill="#696c7a"/><rect x="2.5" y="6.3" width="5.6" height="1.2" fill="#fff"/><rect x="2.5" y="9" width="5.6" height="1.2" fill="#fff"/></svg>
<svg class="abs" style="left:17px;top:62px" width="6" height="10" viewBox="0 0 6 10"><path d="M0 .3L5.6 5L0 9.7Z" fill="#555"/></svg>
<span class="abs" style="left:35px;top:53px;line-height:30px;font-size:14.75px;color:#555a66;white-space:nowrap">详细配置</span>
<div class="shead" style="top:99px"><svg class="abs" style="left:15px;top:14px" width="13" height="8" viewBox="0 0 13 8"><path d="M.6.8L6.5 6.8L12.4.8" fill="none" stroke="#777" stroke-width="1.1"/></svg><span class="t">按钮</span></div><svg class="abs" style="left:281px;top:110px" width="14" height="15" viewBox="0 0 14 15"><path d="M3 1.4V1.3a1.1 1.1 0 0 1 1.1-1.1H12a1.1 1.1 0 0 1 1.1 1.1V11a1.1 1.1 0 0 1-1.1 1.1H11.9" fill="none" stroke="#696c7a" stroke-width="1.2"/><rect x="0" y="2.4" width="10.6" height="12.2" rx="1.9" fill="#696c7a"/><rect x="2.5" y="6.3" width="5.6" height="1.2" fill="#fff"/><rect x="2.5" y="9" width="5.6" height="1.2" fill="#fff"/></svg>
<div class="row" style="top:143px"><i class="rad"></i><span class="lab">边框圆角</span><div class="inp">4</div></div>
<div class="row" style="top:180.5px"><i class="rad"></i><span class="lab">边框宽度</span><div class="inp">1</div></div>
<div class="row" style="top:218px"><i class="rad"></i><span class="lab">边框颜色</span><div class="inp col"><i class="sw" style="background:#0a7cff"></i></div></div>
<div class="row" style="top:255.5px"><span class="lab">边框线条</span><div class="inp">实线<svg class="chev" width="13" height="8" viewBox="0 0 13 8"><path d="M.6.8L6.5 6.8L12.4.8" fill="none" stroke="#8a8d96" stroke-width="1.1"/></svg></div></div>
<div class="row" style="top:293px"><i class="rad"></i><span class="lab">背景颜色</span><div class="inp col"><i class="sw" style="background:#0a7cff"></i></div></div>
<div class="row" style="top:330.5px"><i class="rad"></i><span class="lab">划过颜色</span><div class="inp col"><i class="sw" style="background:#2e8bff"></i></div></div>
<div class="row" style="top:368px"><i class="rad"></i><span class="lab">点击颜色</span><div class="inp col"><i class="sw" style="background:#0787ff"></i></div></div>
<div class="row" style="top:405.5px"><i class="rad"></i><span class="lab">阴影粗细</span><div class="inp">10</div></div>
<div class="row" style="top:443px"><i class="rad"></i><span class="lab">阴影颜色</span><div class="inp col"><i class="sw" style="background-color:#b1b1b1;background-image:linear-gradient(45deg,#999 25%,transparent 25%,transparent 75%,#999 75%),linear-gradient(45deg,#999 25%,transparent 25%,transparent 75%,#999 75%);background-size:15.6px 15.6px;background-position:-1px 0,6.8px 7.8px"></i></div></div>
<div class="shead" style="top:487px"><svg class="abs" style="left:15px;top:14px" width="13" height="8" viewBox="0 0 13 8"><path d="M.6.8L6.5 6.8L12.4.8" fill="none" stroke="#777" stroke-width="1.1"/></svg><span class="t">递增递减</span></div><svg class="abs" style="left:219.5px;top:501px" width="17" height="11" viewBox="0 0 17 11"><path d="M16.3 3.1H1.6L5.4.4M.7 6.9H15.4L11.6 9.6" fill="none" stroke="#555" stroke-width="1.7" stroke-linejoin="round"/></svg><svg class="abs" style="left:251.5999999999999px;top:499px" width="14" height="15" viewBox="0 0 14 15"><g fill="none" stroke="#f4575f"><path d="M4 2.8V1.3a.7.7 0 0 1 .7-.7H9.3a.7.7 0 0 1 .7.7V2.8" stroke-width="1.2"/><path d="M2.6 4.2V13a1 1 0 0 0 1 1H10.4a1 1 0 0 0 1-1V4.2" stroke-width="1.6"/><path d="M5.6 4.2V13.6M8.4 4.2V13.6" stroke-width="1.4"/></g><rect x="0" y="2.7" width="14" height="1.6" rx=".5" fill="#f4575f"/></svg><svg class="abs" style="left:281px;top:499px" width="14" height="15" viewBox="0 0 14 15"><path d="M3 1.4V1.3a1.1 1.1 0 0 1 1.1-1.1H12a1.1 1.1 0 0 1 1.1 1.1V11a1.1 1.1 0 0 1-1.1 1.1H11.9" fill="none" stroke="#696c7a" stroke-width="1.2"/><rect x="0" y="2.4" width="10.6" height="12.2" rx="1.9" fill="#696c7a"/><rect x="2.5" y="6.3" width="5.6" height="1.2" fill="#fff"/><rect x="2.5" y="9" width="5.6" height="1.2" fill="#fff"/></svg>
<div class="row" style="top:532.8px"><span class="lab">事件类型</span><div class="inp">鼠标点击<svg class="chev" width="13" height="8" viewBox="0 0 13 8"><path d="M.6.8L6.5 6.8L12.4.8" fill="none" stroke="#8a8d96" stroke-width="1.1"/></svg></div></div>
<div class="row" style="top:570.4px"><i class="rad"></i><span class="lab">操作确认</span><i class="cb"></i></div>
<div class="row" style="top:606.8px"><span class="lab">变量</span><div class="inp">页码</div></div>
<div class="row" style="top:645px"><span class="lab">写入方式</span><div class="inp">递减<svg class="chev" width="13" height="8" viewBox="0 0 13 8"><path d="M.6.8L6.5 6.8L12.4.8" fill="none" stroke="#8a8d96" stroke-width="1.1"/></svg></div></div>
<div class="row" style="top:682px"><i class="rad"></i><span class="lab">步长</span><div class="inp">1</div></div>
<div class="row" style="top:719.5px"><i class="rad"></i><span class="lab">自动循环</span><i class="cb"></i></div>
<div class="row" style="top:757.8px"><i class="rad"></i><span class="lab">最小值</span><div class="inp" style="border:1.3px solid #3064fe">1<i class="abs" style="right:8px;top:6px;width:19px;height:16px;background:#efefef"></i><svg class="abs" style="right:12.6px;top:8.6px" width="9" height="11" viewBox="0 0 9 11"><path d="M4.5 0L8.8 4.7H.2ZM4.5 11L8.8 6.3H.2Z" fill="#444"/></svg></div></div>
<div class="row" style="top:795.5px"><i class="rad"></i><span class="lab">显示控制结果</span><i class="cb on"><svg class="abs" style="left:2px;top:3px" width="12" height="10" viewBox="0 0 12 10"><path d="M1.2 5L4.7 8.6L11.2 1.4" fill="none" stroke="#fff" stroke-width="1.3"/></svg></i></div>
<div class="row" style="top:833px"><i class="rad"></i><span class="lab">记录操作日志</span><i class="cb on"><svg class="abs" style="left:2px;top:3px" width="12" height="10" viewBox="0 0 12 10"><path d="M1.2 5L4.7 8.6L11.2 1.4" fill="none" stroke="#fff" stroke-width="1.3"/></svg></i></div>
<div class="abs" style="left:0;top:875px;width:308px;height:31px;border:1px dashed #e3e5ec;border-radius:4px;background:#fff"></div>
<svg class="abs" style="left:114px;top:883px" width="15" height="15" viewBox="0 0 15 15" fill="none" stroke="#555a66" stroke-width="1.1"><circle cx="7.5" cy="7.5" r="6.8"/><path d="M4 7.5H11M7.5 4V11"/></svg>
<span class="abs" style="left:136px;top:876px;line-height:30px;font-size:14.75px;color:#555a66;white-space:nowrap">添加组件</span>
</div>
<!--STATUS-->
<div id="status">
<span class="t" style="left:5px">类型:&nbsp; 普通画面</span>
<i class="sp" style="left:121px"></i>
<span class="t" style="left:135px">缩放:&nbsp; <span style="letter-spacing:.4px">50%</span></span>
<i class="sp" style="left:222px"></i>
<span class="t" style="left:236px">位置:&nbsp; <span style="letter-spacing:.45px">[ 879, 506 ]</span></span>
<span class="t" style="left:839px">50%</span>
<svg class="abs" style="left:888px;top:8px" width="185" height="16" viewBox="889 996 185 16" fill="none" stroke="#8d919c" stroke-width="1.1"><circle cx="895.4" cy="1002.4" r="5.3"/><path d="M899.3 1006.3L903.6 1010.4M892.8 1002.4H898"/><circle cx="1062.6" cy="1002.4" r="5.3"/><path d="M1066.5 1006.3L1070.8 1010.4M1060 1002.4H1065.2M1062.6 999.8V1005"/><path d="M918 1003H1043" stroke="#c9c9c9" stroke-width="2.6"/><path d="M918 1003H931" stroke="#5a5e6b" stroke-width="2.6"/><circle cx="934.8" cy="1003" r="4.2" fill="#fff" stroke="#5a5e6b" stroke-width="1.8"/></svg>
<span class="t" style="left:1479px">已选中:&nbsp; <span style="letter-spacing:1.05px">button2</span></span>
<span class="t" style="left:1618px">刷新</span>
<svg class="abs" style="left:1653px;top:9px" width="16" height="15" viewBox="0 0 16 15" fill="none" stroke="#8d919c" stroke-width="1.5"><path d="M1.2 7.2A6.4 6.4 0 0 1 13.2 3.8M13.6.6V4.2H10"/><path d="M14.8 7.8A6.4 6.4 0 0 1 2.8 11.2M2.4 14.4V10.8H6"/></svg>
<i class="sp" style="left:1689px"></i>
<span class="t" style="left:1703.5px">实时渲染:</span>
<div class="abs" style="left:1772px;top:6px;width:37px;height:21px;border-radius:11px;background:#2f62f6"><i class="abs" style="right:1.6px;top:2.2px;width:16.6px;height:16.6px;border-radius:50%;background:#fff"></i></div>
<i class="sp" style="left:1817px"></i>
<span class="t" style="left:1831px">组件数量:&nbsp; 4</span>
</div>
<!--ANNOT-->
<svg class="abs" style="left:0;top:0;pointer-events:none" width="1920" height="1020" viewBox="0 0 1920 1020">
<path d="M221.7 279.7H78" stroke="#e81520" stroke-width="1.5" fill="none"/><path d="M74 279.7L81.4 276.3L79.6 279.7L81.4 283.09999999999997Z" fill="#e81520"/>
<path d="M771.2 176V239.8" stroke="#e81520" stroke-width="1.5" fill="none"/><path d="M771.2 243.8L767.8000000000001 236.4L771.2 238.20000000000002L774.6 236.4Z" fill="#e81520"/>
<path d="M1841 511.5V575.4" stroke="#e81520" stroke-width="1.5" fill="none"/><path d="M1841 579.4L1837.6 572.0L1841 573.8L1844.4 572.0Z" fill="#e81520"/>
<path d="M1551 587.9H1616.2" stroke="#e81520" stroke-width="1.5" fill="none"/><path d="M1620.2 587.9L1612.8 584.5L1614.6000000000001 587.9L1612.8 591.3Z" fill="#e81520"/>
<path d="M1555.3 703H1619.8" stroke="#e81520" stroke-width="1.5" fill="none"/><path d="M1623.8 703L1616.3999999999999 699.6L1618.2 703L1616.3999999999999 706.4Z" fill="#e81520"/>
<path d="M1556 743.5H1619.8" stroke="#e81520" stroke-width="1.5" fill="none"/><path d="M1623.8 743.5L1616.3999999999999 740.1L1618.2 743.5L1616.3999999999999 746.9Z" fill="#e81520"/>
<path d="M1555.3 853.8H1619.8" stroke="#e81520" stroke-width="1.5" fill="none"/><path d="M1623.8 853.8L1616.3999999999999 850.4L1618.2 853.8L1616.3999999999999 857.1999999999999Z" fill="#e81520"/>
</svg>
<span class="red" style="left:246.5px;top:266.3px;font-size:18px">1</span>
<span class="red" style="left:747.2px;top:195.3px;font-size:18px">2</span>
<span class="red" style="left:1805.5px;top:486.7px;font-size:17.65px">3：切换组件</span>
<span class="red" style="left:1570.5px;top:551.8px;font-size:17.65px">4：选择 递增递减 组件</span>
<span class="red" style="left:1576.3px;top:674.5px;font-size:17.65px">5：关联变量</span>
<span class="red" style="left:1573.3px;top:717.8px;font-size:17.65px">6：选择事件</span>
<span class="red" style="left:1579.8px;top:827.8px;font-size:17.65px">7：最下值1</span>
</body>
</html>
